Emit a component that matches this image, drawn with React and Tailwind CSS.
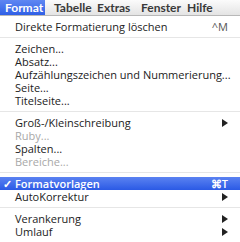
const font = { fontFamily: '"Open Sans", sans-serif' }
const barFont = { fontFamily: 'Lato, sans-serif' }

const items = [
  { label: 'Direkte Formatierung löschen', shortcut: '^M' },
  { sep: true },
  { label: 'Zeichen...' },
  { label: 'Absatz...' },
  { label: 'Aufzählungszeichen und Nummerierung...' },
  { label: 'Seite...' },
  { label: 'Titelseite...' },
  { sep: true },
  { label: 'Groß-/Kleinschreibung', sub: true },
  { label: 'Ruby...', disabled: true },
  { label: 'Spalten...' },
  { label: 'Bereiche...', disabled: true },
  { sep: true },
  { label: 'Formatvorlagen', shortcut: '⌘T', checked: true, active: true },
  { label: 'AutoKorrektur', sub: true },
  { sep: true },
  { label: 'Verankerung', sub: true },
  { label: 'Umlauf', sub: true },
]

function Arrow() {
  return (
    <svg width="6" height="8" viewBox="0 0 6 8" className="fill-current">
      <path d="M0 0L6 4L0 8Z" />
    </svg>
  )
}

export default function App() {
  return (
    <div className="w-[240px] h-[242px] overflow-hidden bg-white text-[11px]" style={font}>
      <div
        className="grid grid-cols-[45px_52px_44px_46px_1fr] h-[16px] items-center bg-gradient-to-b from-[#fbfbfb] to-[#e4e4e4] border-b border-[#b8b8b8] text-[12px] leading-[15px] font-bold text-[#3a3a3a]"
        style={barFont}
      >
        <div className="h-full flex items-center pl-[5px] bg-gradient-to-b from-[#5f87f2] to-[#2f5fe6] text-white">Format</div>
        <div className="pl-[9px]">Tabelle</div>
        <div>Extras</div>
        <div>Fenster</div>
        <div>Hilfe</div>
      </div>
      <div className="pt-[4px]">
        {items.map((it, i) =>
          it.sep ? (
            <div key={i} className="h-[9px] flex items-center">
              <div className="h-px w-full bg-[#e6e6e6]" />
            </div>
          ) : (
            <div
              key={i}
              className={
                'h-[13px] leading-[13px] flex items-center pl-[15px] pr-[12px] relative ' +
                (it.active ? 'bg-gradient-to-b from-[#5b82f1] to-[#2b59e5] text-white font-semibold' : it.disabled ? 'text-[#a8a8a8]' : 'text-[#222]')
              }
            >
              {it.checked && <span className="absolute left-[3px]">✓</span>}
              <span className="flex-1 whitespace-nowrap">{it.label}</span>
              {it.shortcut && <span className={it.active ? 'text-white' : 'text-[#555]'}>{it.shortcut}</span>}
              {it.sub && <span className="text-[#222]"><Arrow /></span>}
            </div>
          )
        )}
      </div>
    </div>
  )
}
